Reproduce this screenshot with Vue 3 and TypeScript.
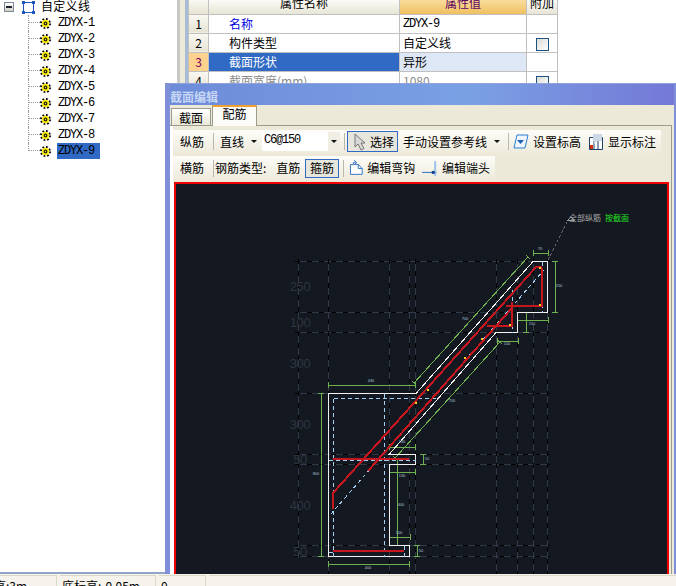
<script setup lang="ts">
type Seg = [number, number, number, number];

const treeItems = ["ZDYX-1", "ZDYX-2", "ZDYX-3", "ZDYX-4", "ZDYX-5", "ZDYX-6", "ZDYX-7", "ZDYX-8", "ZDYX-9"];

const hGrid = [261, 312, 332, 393, 454, 464, 545, 556];
const vGrid = [328, 389, 409, 415, 496, 517, 533, 547];

const outline = "328.5,393.5 416,393.5 533,261.5 547.5,261.5 547.5,312.5 517.5,312.5 517.5,332.5 496,332.5 389,454.5 415.5,454.5 415.5,464.5 389.5,464.5 389.5,545.5 409.5,545.5 409.5,556.5 328.5,556.5";

const blueDash: Seg[] = [
  [333, 398, 437, 398],
  [333, 398, 333, 556],
  [384, 393, 384, 556],
  [328, 460, 415, 460],
  [328, 552, 333, 552],
  [404, 545, 404, 556],
  [512, 289, 512, 332],
  [542, 261, 542, 312],
  [330, 514, 543, 270],
];

const rebars = [
  "333,509 333,493 536,267 541,267 542,269 542,306 506,306",
  "368,471 512,308",
  "512,302 512,326 487,326",
  "333,459 409,459",
  "333,551 404,551",
];

const yellowMarks = [[539, 267], [539, 304], [509, 324], [481, 338], [464, 357], [427, 389], [415, 402]];

const dims: Seg[] = [
  [414, 383, 528, 257],
  [500, 342, 395, 458],
  [328, 385, 415, 385],
  [533, 253, 548, 253],
  [555, 261, 555, 312],
  [517, 320, 548, 320],
  [526, 312, 526, 332],
  [497, 341, 518, 341],
  [321, 393, 321, 556],
  [328, 564, 409, 564],
  [389, 447, 415, 447],
  [423, 454, 423, 464],
  [389, 472, 415, 472],
  [397, 458, 397, 545],
  [389, 537, 410, 537],
  [417, 545, 417, 556],
];

// end ticks are a short stroke across each end of the dimension line
const dimPath = (s: Seg) => {
  const [x1, y1, x2, y2] = s;
  const len = Math.hypot(x2 - x1, y2 - y1);
  const nx = ((y2 - y1) / len) * 3;
  const ny = ((x1 - x2) / len) * 3;
  return `M${x1} ${y1}L${x2} ${y2}M${x1 - nx} ${y1 - ny}L${x1 + nx} ${y1 + ny}M${x2 - nx} ${y2 - ny}L${x2 + nx} ${y2 + ny}`;
};

const sizeLabels = [
  { x: 371, y: 382, t: "430" },
  { x: 540, y: 250, t: "70" },
  { x: 559, y: 287, t: "250" },
  { x: 532, y: 325, t: "150" },
  { x: 507, y: 345, t: "100" },
  { x: 465, y: 320, t: "700" },
  { x: 452, y: 402, t: "700" },
  { x: 316, y: 475, t: "800" },
  { x: 368, y: 569, t: "400" },
  { x: 402, y: 443, t: "130" },
  { x: 427, y: 460, t: "50" },
  { x: 402, y: 477, t: "130" },
  { x: 401, y: 506, t: "400" },
  { x: 399, y: 534, t: "100" },
  { x: 421, y: 552, t: "50" },
];

const heights = [
  { y: 291, t: "250" },
  { y: 327, t: "100" },
  { y: 368, t: "300" },
  { y: 429, t: "300" },
  { y: 464, t: "50" },
  { y: 510, t: "400" },
  { y: 556, t: "50" },
];
</script>

<template>
  <div class="page">
    <div class="main">
      <div class="tree">
        <div class="root">
          <span class="minus"></span>
          <svg class="root-icon" width="13" height="13" viewBox="0 0 13 13">
            <rect x="1.5" y="1.5" width="10" height="10" fill="none" stroke="#1f55c0" />
            <path d="M0 0h3v3H0zM10 0h3v3h-3zM0 10h3v3H0zM10 10h3v3h-3z" fill="#1f55c0" />
          </svg>
          <span class="root-label">自定义线</span>
        </div>
        <ul class="list">
          <li v-for="(name, i) in treeItems" :key="name" class="item">
            <span class="elbow"></span>
            <svg width="11" height="11" viewBox="0 0 11 11">
              <circle cx="5.5" cy="5.5" r="4.4" fill="none" stroke="#000" stroke-width="2.2" stroke-dasharray="1.7 1.75" />
              <circle cx="5.5" cy="5.5" r="3.7" fill="#ffee00" />
              <circle cx="5.5" cy="5.5" r="1.9" fill="#222" />
              <circle cx="5.5" cy="5.5" r="0.7" fill="#ffee00" />
            </svg>
            <span class="item-name" :class="{ sel: i === treeItems.length - 1 }">{{ name }}</span>
          </li>
        </ul>
      </div>
      <div class="splitter"></div>
      <div class="props">
        <table>
          <colgroup>
            <col class="c-no" /><col class="c-name" /><col class="c-val" /><col class="c-add" />
          </colgroup>
          <thead>
            <tr>
              <th class="no"></th>
              <th>属性名称</th>
              <th class="val-head">属性值</th>
              <th>附加</th>
            </tr>
          </thead>
          <tbody>
            <tr>
              <td class="no">1</td>
              <td class="name link">名称</td>
              <td class="mono">ZDYX-9</td>
              <td></td>
            </tr>
            <tr>
              <td class="no">2</td>
              <td class="name">构件类型</td>
              <td>自定义线</td>
              <td><span class="check"></span></td>
            </tr>
            <tr>
              <td class="no cur">3</td>
              <td class="name picked">截面形状</td>
              <td class="val-picked">异形</td>
              <td></td>
            </tr>
            <tr class="off">
              <td class="no">4</td>
              <td class="name">截面宽度(mm)</td>
              <td>1080</td>
              <td><span class="check"></span></td>
            </tr>
          </tbody>
        </table>
      </div>
    </div>

    <div class="status">
      <div class="field f1"><span>层高:3m</span></div>
      <div class="field f2"><span>底标高:-0.05m</span></div>
      <div class="field f3"><span>0</span></div>
      <div class="field f4"></div>
    </div>

    <div class="dialog">
      <div class="title">截面编辑</div>
      <div class="tabs">
        <div class="tab">截面</div>
        <div class="tab active">配筋</div>
      </div>
      <div class="panel">
        <div class="bar bar1">
          <span>纵筋</span>
          <i class="sep m9"></i>
          <span class="m6">直线</span>
          <i class="arrow m7"></i>
          <div class="combo m5">
            <span class="combo-text">C6@150</span>
            <span class="combo-btn"><i class="arrow"></i></span>
          </div>
          <i class="sep m4"></i>
          <button class="tbtn select m2">
            <svg width="14" height="18" viewBox="0 0 14 18">
              <path d="M2 1v13l3-3 3 6 3-1.500-3-5.500h4z" fill="#d8d8d8" stroke="#777" />
            </svg>
            <span>选择</span>
          </button>
          <span class="m5">手动设置参考线</span>
          <i class="arrow m7"></i>
          <i class="sep m8"></i>
          <svg class="m4" width="16" height="15" viewBox="0 0 16 15">
            <path d="M4 1h11l-3 13H1z" fill="#eef5ff" stroke="#2b7fd0" />
            <path d="M4 6h7l-3.500 4z" fill="#1c62b8" />
          </svg>
          <span class="m4">设置标高</span>
          <svg class="m8" width="14" height="16" viewBox="0 0 14 16">
            <path d="M0.500 3.500h13v12h-13z" fill="#fff" stroke="#1d3f66" />
            <path d="M5 4v11M9 4v11" stroke="#1d3f66" />
            <path d="M1 11h3v4H1z" fill="#d03010" />
            <path d="M4 0h9v7H8l-3 3V7H4z" fill="#cdd8e6" />
          </svg>
          <span class="m5">显示标注</span>
        </div>
        <div class="bar bar2">
          <span>横筋</span>
          <i class="sep m9"></i>
          <span class="m1">钢筋类型:</span>
          <span class="m10">直筋</span>
          <button class="tbtn stirrup m5">箍筋</button>
          <i class="sep m4"></i>
          <svg class="m5" width="15" height="16" viewBox="0 0 15 16">
            <path d="M1.500 4.500h3v-2h2v2l3 0 4 4v6h-12z" fill="#fff" stroke="#3576c4" />
            <path d="M9.500 4.500v4h4" fill="none" stroke="#3576c4" />
            <path d="M5 0l3 2.500L5 5" fill="none" stroke="#3576c4" />
          </svg>
          <span class="m4">编辑弯钩</span>
          <svg class="m7" width="15" height="15" viewBox="0 0 15 15">
            <path d="M0 11.500h15" stroke="#2a6cc0" />
            <path d="M13.500 0v15" stroke="#9cc0ea" stroke-width="2" />
            <path d="M10 10h3v3h-3z" fill="#123f8c" />
          </svg>
          <span class="m5">编辑端头</span>
        </div>
        <div class="canvas">
          <svg class="drawing" width="491" height="390" viewBox="176 184 491 390">
            <g v-for="y in hGrid" :key="'h' + y">
              <line x1="295" :y1="y + 0.5" x2="550" :y2="y + 0.5" class="grid" />
              <line x1="295" :y1="y + 0.5" x2="550" :y2="y + 0.5" class="grid-dash" />
            </g>
            <line x1="298.500" y1="259" x2="298.500" y2="558" class="grid" />
            <line x1="298.500" y1="259" x2="298.500" y2="558" class="grid-dash" />
            <g v-for="x in vGrid" :key="'v' + x">
              <line :x1="x + 0.5" y1="259" :x2="x + 0.5" y2="574" class="grid" />
              <line :x1="x + 0.5" y1="259" :x2="x + 0.5" y2="574" class="grid-dash" />
            </g>
            <text v-for="h in heights" :key="h.y" x="300" :y="h.y" class="height">{{ h.t }}</text>

            <path d="M548 260L568 220" class="leader" />
            <path d="M568 220l3-3 3 3z" fill="none" stroke="#9a9a9a" />
            <text x="569" y="221" class="note">全部纵筋</text>
            <text x="605" y="221" class="note green">按截面</text>

            <path v-for="(d, i) in dims" :key="'d' + i" :d="dimPath(d)" class="dim" />
            <polygon :points="outline" class="outline" />
            <line v-for="(b, i) in blueDash" :key="'b' + i" :x1="b[0] + 0.5" :y1="b[1] + 0.5" :x2="b[2] + 0.5" :y2="b[3] + 0.5" class="blue" />
            <polyline v-for="(r, i) in rebars" :key="'r' + i" :points="r" class="rebar" />
            <rect v-for="(m, i) in yellowMarks" :key="'y' + i" :x="m[0]" :y="m[1]" width="2" height="2" fill="#f0d020" />
            <text v-for="(l, i) in sizeLabels" :key="'l' + i" :x="l.x" :y="l.y" class="size">{{ l.t }}</text>
          </svg>
        </div>
      </div>
    </div>
  </div>
</template>

<style>
html, body { margin: 0; background: #fff; overflow: hidden; }
</style>

<style scoped>
.page {
  position: relative;
  width: 676px;
  height: 586px;
  overflow: hidden;
  display: flex;
  flex-direction: column;
  background: #fff;
  color: #000;
  font: 12px/16px "Noto Sans CJK SC", "Liberation Sans", sans-serif;
}
.main {
  display: flex;
  height: 572px;
  border-bottom: 2px solid #8ea4c8;
  box-sizing: content-box;
}
.tree { width: 177px; flex: none; }
.root { display: flex; align-items: center; height: 14px; }
.minus {
  position: relative;
  width: 8px;
  height: 8px;
  margin-left: 4px;
  border: 1px solid #7a8a99;
  background: linear-gradient(#fff, #cfcfc4);
}
.minus::after { content: ""; position: absolute; left: 1px; right: 1px; top: 3px; height: 2px; background: #223; }
.root-icon { margin-left: 8px; }
.root-label { margin-left: 6px; margin-top: -2px; letter-spacing: 0.3px; }
.list { list-style: none; margin: 1px 0 0 28px; padding: 0; }
.item { display: flex; align-items: center; height: 16px; border-left: 1px dotted #999; }
.item:last-child { border-left-color: transparent; }
.elbow {
  align-self: flex-start;
  width: 11px;
  height: 8px;
  border-bottom: 1px dotted #999;
  box-sizing: border-box;
}
.item:last-child .elbow { border-left: 1px dotted #999; margin-left: -1px; width: 12px; }
.item-name {
  margin-left: 6px;
  padding: 0 1px;
  width: 43px;
  height: 16px;
  box-sizing: border-box;
  font: 12px/16px "Liberation Mono", monospace;
  letter-spacing: -1.2px;
}
.item-name.sel { background: #316ac5; color: #000; }

.splitter {
  width: 11px;
  flex: none;
  box-sizing: border-box;
  background: #ece9d8;
  border-left: 3px solid #c8c8c4;
  border-right: 3px solid #a8bcd8;
}
.props { flex: 1; }
table { border-collapse: collapse; table-layout: fixed; width: 369px; }
.c-no { width: 20px; }
.c-name { width: 191px; }
.c-val { width: 127px; }
.c-add { width: 31px; }
th, td {
  border: 1px solid #c0c0c0;
  padding: 0;
  font-weight: 400;
  height: 18px;
  line-height: 16px;
  overflow: hidden;
  white-space: nowrap;
}
thead tr { height: 14px; }
th {
  height: 13px;
  line-height: 6px;
  vertical-align: top;
  border-top: none;
  background: linear-gradient(#fbfaf5, #e8e5d6);
}
.val-head { background: linear-gradient(#f8dc9c, #f0c060); color: #600060; }
.no { text-align: center; background: linear-gradient(#f9f8f2, #e6e3d4); }
.no.cur { background: #fdd28e; color: #800060; }
.name { padding-left: 20px; }
td:nth-child(3) { padding-left: 3px; }
.link { color: #0000e0; }
.picked { background: #316ac5; color: #fff; }
.val-picked { background: #dde7f5; }
.mono { font: 12px/16px "Liberation Mono", monospace; letter-spacing: -1.2px; }
td:last-child { text-align: center; }
.check {
  display: inline-block;
  width: 11px;
  height: 11px;
  vertical-align: middle;
  border: 1px solid #1c5180;
  background: linear-gradient(135deg, #dcdcd6, #fff);
}
.off td:not(.no) { color: #8a8a8a; }

.status {
  flex: 1;
  display: flex;
  gap: 3px;
  padding-top: 1px;
  background: #f5f3ec;
  overflow: hidden;
}
.field {
  height: 20px;
  box-sizing: border-box;
  padding: 2px 0 0 2px;
  border: 1px solid #dcd9c8;
  border-width: 1px 1px 0 0;
  white-space: nowrap;
}
.f1 { width: 57px; padding-left: 0; }
.f1 span { margin-left: -18px; }
.f2 { width: 96px; }
.f3 { width: 47px; }
.f4 { flex: 1; border-right: none; }

.dialog {
  position: absolute;
  left: 165px;
  top: 83px;
  width: 511px;
  height: 491px;
  display: flex;
  flex-direction: column;
  box-sizing: border-box;
  border-left: 5px solid #8090d8;
  border-right: 2px solid #8090d8;
  background: #ece9d8;
  overflow: hidden;
}
.title {
  height: 22px;
  margin-left: -5px;
  margin-right: -2px;
  padding-left: 5px;
  flex: none;
  color: #c8d8f5;
  font-weight: 700;
  line-height: 25px;
  border-top: 1px solid #8fa4d8;
  box-sizing: border-box;
  background: linear-gradient(90deg, #6d8bd9, #7aa0e4 60%, #7478d6);
}
.tabs { display: flex; align-items: flex-end; height: 20px; flex: none; padding-left: 1px; }
.tab {
  width: 40px;
  height: 17px;
  box-sizing: border-box;
  text-align: center;
  line-height: 18px;
  border: 1px solid #9c9b90;
  border-bottom: none;
  background: linear-gradient(#fff, #ece9d8);
}
.tab.active {
  width: 45px;
  height: 21px;
  margin-left: 1px;
  margin-bottom: -1px;
  position: relative;
  line-height: 14px;
  background: #fbfbf8;
  border-top: 2px solid #f0a030;
}
.panel {
  flex: 1;
  min-height: 0;
  display: flex;
  flex-direction: column;
  box-sizing: border-box;
  padding: 4px 0 0 3px;
  margin-right: 2px;
  border-top: 1px solid #9c9b90;
  border-right: 1px solid #9c9b90;
  box-shadow: inset 3px 0 0 #fff;
}
.bar {
  display: flex;
  align-items: center;
  flex: none;
  padding: 0 5px 0 7px;
  background: linear-gradient(#fdfcf8, #eeebdc);
  white-space: nowrap;
}
.bar1 { height: 23px; width: 488px; box-sizing: border-box; }
.bar2 { height: 24px; width: 322px; box-sizing: border-box; margin-top: 3px; }
.sep { display: block; width: 1px; height: 17px; background: #b8b8ac; flex: none; }
.arrow {
  display: block;
  width: 0;
  height: 0;
  flex: none;
  border: 3px solid transparent;
  border-top: 3px solid #111;
  border-bottom: none;
}
.combo {
  display: flex;
  justify-content: space-between;
  width: 78px;
  height: 19px;
  background: #fff;
}
.combo-text { margin-left: 2px; font: 12px/16px "Liberation Mono", monospace; letter-spacing: -1.2px; }
.combo-btn { display: flex; align-items: center; justify-content: center; width: 12px; background: #f0eee2; }
.tbtn {
  display: flex;
  align-items: center;
  height: 21px;
  padding: 0;
  box-sizing: border-box;
  border: 1px solid #316ac5;
  background: #e7e6dd;
  color: #000;
  font: inherit;
}
.select { width: 51px; padding-left: 5px; }
.select span { margin-left: 3px; }
.stirrup { width: 34px; height: 19px; justify-content: center; }
.m1 { margin-left: 1px; }
.m2 { margin-left: 2px; }
.m4 { margin-left: 4px; }
.m5 { margin-left: 5px; }
.m6 { margin-left: 6px; }
.m7 { margin-left: 7px; }
.m8 { margin-left: 8px; }
.m9 { margin-left: 9px; }
.m10 { margin-left: 10px; }

.canvas {
  flex: none;
  width: 495px;
  height: 392px;
  margin-top: 2px;
  margin-left: 1px;
  box-sizing: border-box;
  border: 2px solid #f00000;
  border-bottom: none;
  background: #141820;
  box-shadow: -1px 0 0 #fff;
}
.drawing { display: block; shape-rendering: crispEdges; }
.grid { stroke: #323946; stroke-width: 1; }
.grid-dash { stroke: #000; stroke-width: 1; stroke-dasharray: 5 7; }
.height {
  fill: #2e3541;
  font: 13px "Liberation Sans", sans-serif;
  text-anchor: middle;
  letter-spacing: -0.4px;
}
.leader { stroke: #666; stroke-dasharray: 3 2; fill: none; }
.note { fill: #a8a8a8; font: 8px "Noto Sans CJK SC", sans-serif; }
.note.green { fill: #22e022; }
.dim { stroke: #6fb050; stroke-width: 1; fill: none; }
.outline { fill: none; stroke: #f2f2f2; stroke-width: 1; }
.blue { stroke: #a4d0f4; stroke-width: 1; stroke-dasharray: 4 3; }
.rebar { fill: none; stroke: #c8161e; stroke-width: 2; }
.size { fill: #a8c4dc; font: 4px "Liberation Sans", sans-serif; text-anchor: middle; }
</style>
